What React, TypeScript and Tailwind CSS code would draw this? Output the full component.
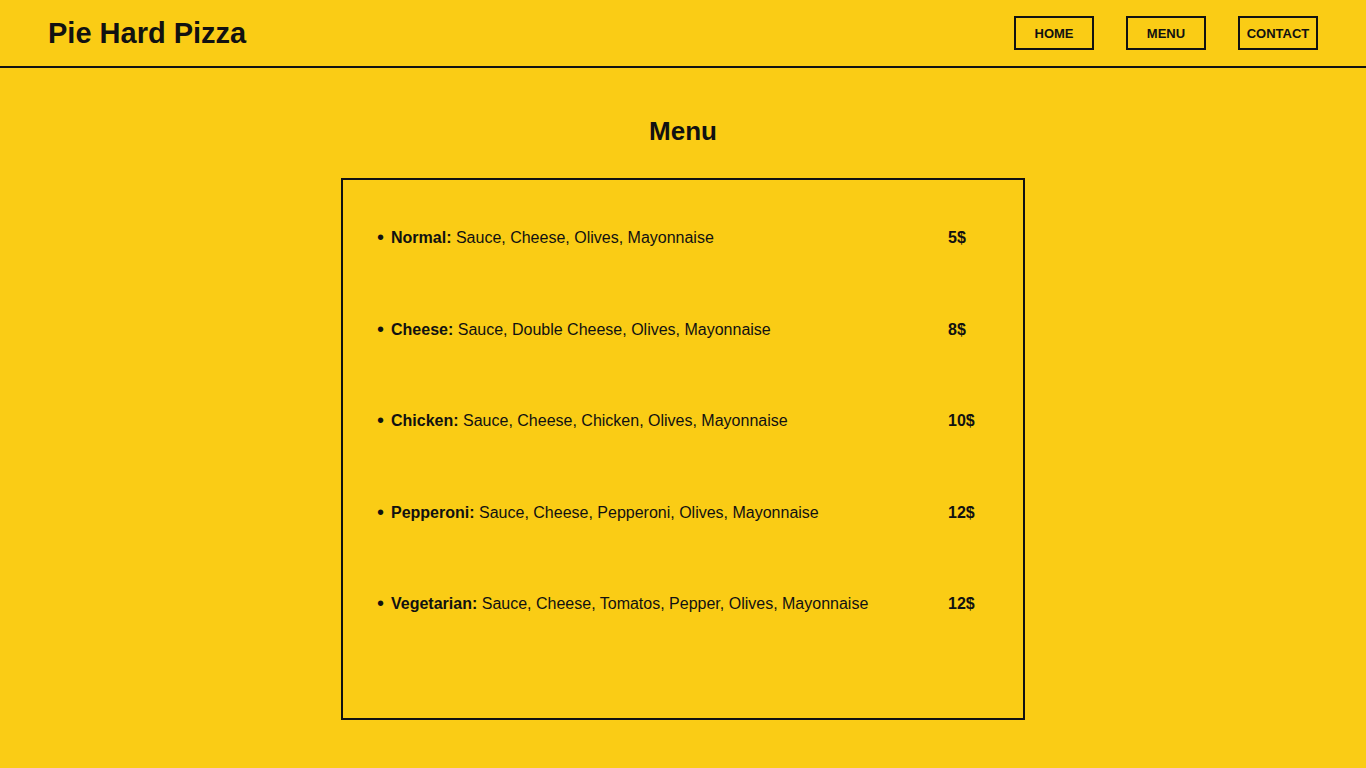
import React from "react";

const items = [
  { name: "Normal:", desc: "Sauce, Cheese, Olives, Mayonnaise", price: "5$" },
  { name: "Cheese:", desc: "Sauce, Double Cheese, Olives, Mayonnaise", price: "8$" },
  { name: "Chicken:", desc: "Sauce, Cheese, Chicken, Olives, Mayonnaise", price: "10$" },
  { name: "Pepperoni:", desc: "Sauce, Cheese, Pepperoni, Olives, Mayonnaise", price: "12$" },
  { name: "Vegetarian:", desc: "Sauce, Cheese, Tomatos, Pepper, Olives, Mayonnaise", price: "12$" },
];

export default function App() {
  return (
    <div
      className="min-h-[768px] bg-[#facc15] text-[#111111]"
      style={{ fontFamily: '"Liberation Sans", Arial, sans-serif' }}
    >
      <header className="h-[68px] border-b-2 border-[#111111] flex items-center justify-between px-12">
        <h1 className="text-[29px] font-bold leading-none">Pie Hard Pizza</h1>
        <nav className="flex gap-8">
          {["HOME", "MENU", "CONTACT"].map((l) => (
            <button
              key={l}
              className="w-[80px] h-[34px] border-2 border-[#111111] text-[13px] font-bold flex items-center justify-center pt-[2px]"
            >
              {l}
            </button>
          ))}
        </nav>
      </header>
      <main className="flex flex-col items-center">
        <h2 className="mt-[48px] text-[26px] font-bold leading-[30px]">Menu</h2>
        <div className="mt-[32px] w-[684px] h-[542px] border-2 border-[#111111] pt-[12px] pl-[34px]">
          <ul className="list-none">
            {items.map((it, i) => (
              <li key={it.name} className={`text-[16px] ${i % 2 === 0 ? "h-[92px]" : "h-[91px]"}`}>
                <div className="h-full grid grid-cols-[14px_557px_1fr] items-center">
                  <span className="text-[20px] leading-none -mt-[2px]">•</span>
                  <span>
                    <b>{it.name}</b> {it.desc}
                  </span>
                  <b>{it.price}</b>
                </div>
              </li>
            ))}
          </ul>
        </div>
      </main>
    </div>
  );
}
